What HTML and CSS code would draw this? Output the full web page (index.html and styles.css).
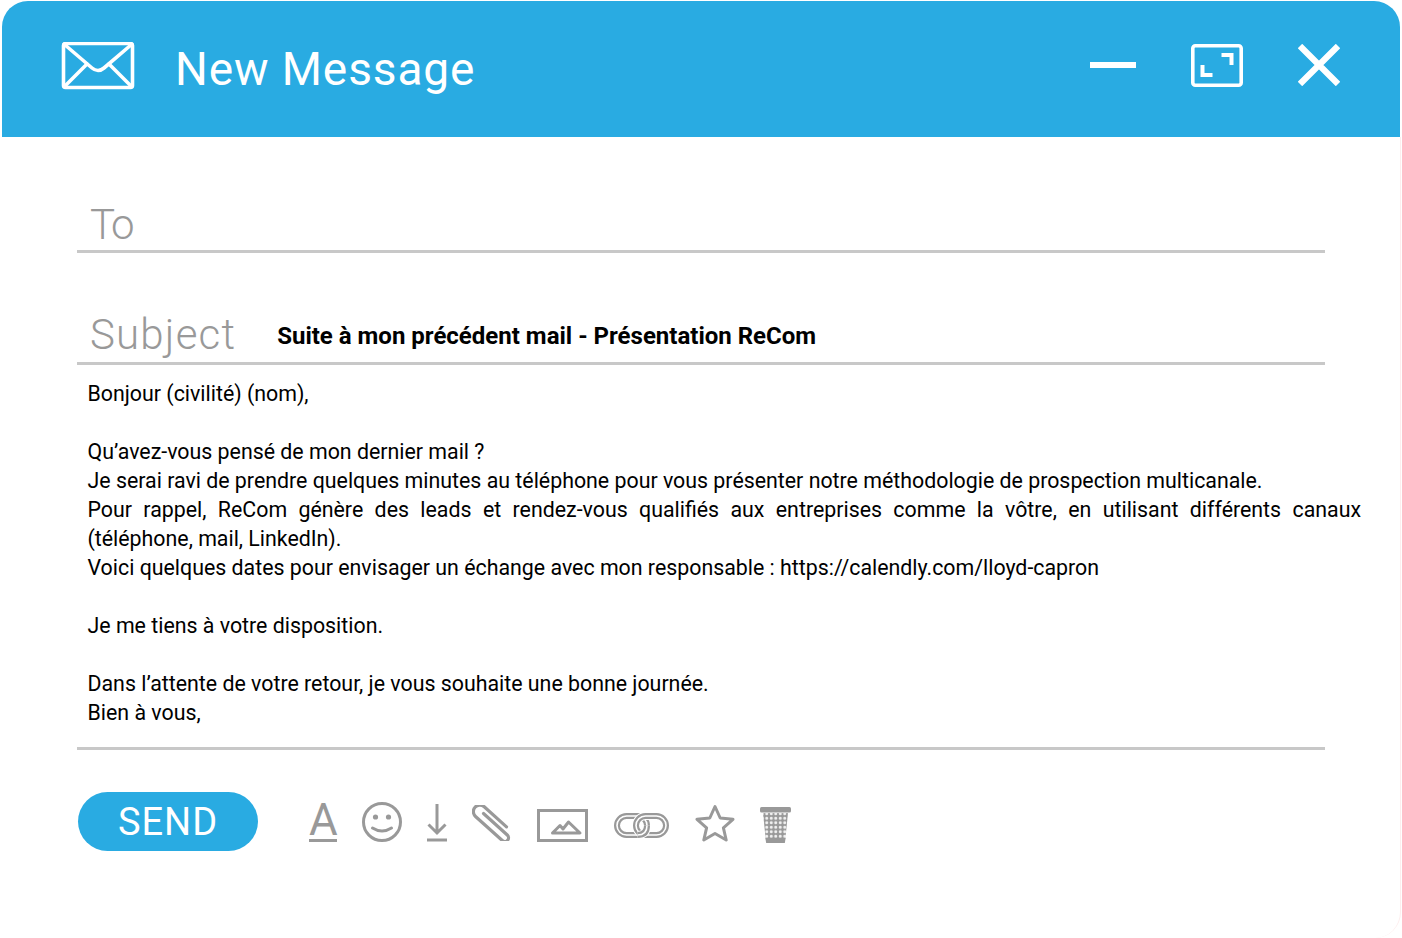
FILE: index.html
```html
<!DOCTYPE html>
<html lang="fr">
<head>
    <meta charset="UTF-8">
    <meta name="viewport" content="width=device-width, initial-scale=1.0">
    <title>New Message</title>
    <link rel="stylesheet" href="styles.css">
</head>
<body>
    <div class="window">
        <!-- Barre de titre -->
        <div class="header">
            <svg class="icon-mail" width="74" height="48" viewBox="0 0 74 48" fill="none" stroke="#fff" stroke-width="3.600" stroke-linejoin="round" stroke-linecap="round">
                <rect x="2.500" y="1.500" width="69" height="44" rx="2"/>
                <path d="M3.500 2.500 L31 26 Q37 31 43 26 L70.500 2.500"/>
                <path d="M3.500 44.500 L26 22 M70.500 44.500 L48 22"/>
            </svg>
            <h1 class="title">New Message</h1>
            <div class="controls">
                <svg class="icon-min" width="46" height="6" viewBox="0 0 46 6"><rect width="46" height="6" fill="#fff"/></svg>
                <svg class="icon-max" width="52" height="43" viewBox="0 0 52 43" fill="none" stroke="#fff">
                    <rect x="1.800" y="1.800" width="48.400" height="39.400" rx="2.500" stroke-width="3.600"/>
                    <path d="M30.500 11 H40.500 V21 M11.500 21 V31 H21.500" stroke-width="4"/>
                </svg>
                <svg class="icon-close" width="42" height="42" viewBox="0 0 42 42" stroke="#fff" stroke-width="6.200">
                    <path d="M2 2 L40 40 M40 2 L2 40"/>
                </svg>
            </div>
        </div>

        <!-- Formulaire -->
        <div class="form">
            <div class="field field-to">
                <span class="label">To</span>
            </div>
            <div class="field field-subject">
                <span class="label">Subject</span>
                <span class="subject">Suite à mon précédent mail - Présentation ReCom</span>
            </div>

            <div class="message">
                <p>Bonjour (civilité) (nom),</p>
                <p>&nbsp;</p>
                <p>Qu’avez-vous pensé de mon dernier mail ?</p>
                <p>Je serai ravi de prendre quelques minutes au téléphone pour vous présenter notre méthodologie de prospection multicanale.</p>
                <p>Pour rappel, ReCom génère des leads et rendez-vous qualifiés aux entreprises comme la vôtre, en utilisant différents canaux (téléphone, mail, LinkedIn).</p>
                <p>Voici quelques dates pour envisager un échange avec mon responsable : https://calendly.com/lloyd-capron</p>
                <p>&nbsp;</p>
                <p>Je me tiens à votre disposition.</p>
                <p>&nbsp;</p>
                <p>Dans l’attente de votre retour, je vous souhaite une bonne journée.</p>
                <p>Bien à vous,</p>
            </div>
            <div class="rule"></div>

            <!-- Barre d'outils -->
            <div class="toolbar">
                <button class="send">SEND</button>
                <div class="tools">
                    <span class="tool-font">A</span>
                    <svg width="40" height="40" viewBox="0 0 40 40" fill="none" stroke="#999" stroke-width="3">
                        <circle cx="20" cy="20" r="18.500"/>
                        <circle cx="13.500" cy="15" r="2.600" fill="#999" stroke="none"/>
                        <circle cx="26.500" cy="15" r="2.600" fill="#999" stroke="none"/>
                        <path d="M10.500 26 Q20 32 29.500 26" stroke-linecap="round"/>
                    </svg>
                    <svg class="tool-down" width="20" height="38" viewBox="0 0 20 38" fill="none" stroke="#999" stroke-width="3">
                        <path d="M10 0 V29 M1.500 20.500 L10 29 L18.500 20.500"/>
                        <path d="M0 36 H20"/>
                    </svg>
                    <svg class="tool-clip" width="41" height="36" viewBox="0 0 41 36" fill="none" stroke="#999" stroke-width="3.200" stroke-linecap="round">
                        <g transform="translate(20.500,18) rotate(42) translate(-25,-8.500)">
                            <path d="M38 2 H8 a6.500 6.500 0 0 0 0 13 H44 a3.750 3.750 0 0 0 0 -7.500 H12"/>
                        </g>
                    </svg>
                    <svg class="tool-image" width="51" height="33" viewBox="0 0 51 33" fill="none" stroke="#999" stroke-width="3">
                        <rect x="1.500" y="1.500" width="48" height="30"/>
                        <path d="M15.500 24 L23 16.500 L26 20 L31.500 13 L43 24 Z" stroke-linejoin="round"/>
                    </svg>
                    <svg class="tool-link" width="55" height="25" viewBox="0 0 55 25" fill="none">
                        <rect x="3" y="3" width="30" height="19" rx="9.500" stroke="#999" stroke-width="6"/>
                        <rect x="3" y="3" width="30" height="19" rx="9.500" stroke="#fff" stroke-width="1.600"/>
                        <rect x="22" y="3" width="30" height="19" rx="9.500" stroke="#fff" stroke-width="8"/>
                        <rect x="22" y="3" width="30" height="19" rx="9.500" stroke="#999" stroke-width="6"/>
                        <rect x="22" y="3" width="30" height="19" rx="9.500" stroke="#fff" stroke-width="1.600"/>
                        <path d="M23.500 22 Q33 22 33 12.500" stroke="#fff" stroke-width="8"/>
                        <path d="M23.500 22 Q33 22 33 12.500" stroke="#999" stroke-width="6"/>
                        <path d="M23.500 22 Q33 22 33 12.500" stroke="#fff" stroke-width="1.600"/>
                    </svg>
                    <svg class="tool-star" width="40" height="38" viewBox="0 0 40 38" fill="none" stroke="#999" stroke-width="3" stroke-linejoin="round">
                        <path d="M20 2.500 L25.200 14 L38 15.300 L28.400 23.800 L31.200 36 L20 29.500 L8.800 36 L11.600 23.800 L2 15.300 L14.800 14 Z"/>
                    </svg>
                    <svg class="tool-trash" width="31" height="36" viewBox="0 0 31 36">
                        <defs>
                            <pattern id="mesh" width="4.500" height="4.500" patternUnits="userSpaceOnUse">
                                <rect width="4.500" height="4.500" fill="#999"/>
                                <circle cx="2.250" cy="2.250" r="1.500" fill="#f2f2f2"/>
                            </pattern>
                        </defs>
                        <rect width="31" height="5.500" rx="1.500" fill="#999"/>
                        <path d="M3 6 H28 L25 35 Q25 36 24 36 H7 Q6 36 6 35 Z" fill="url(#mesh)"/>
                        <path d="M5.500 31 H25.500 L25 35 Q25 36 24 36 H7 Q6 36 6 35 Z" fill="#999"/>
                    </svg>
                </div>
            </div>
        </div>
    </div>
</body>
</html>
```

FILE: styles.css
```css
/* Styles globaux */
body, html {
    margin: 0;
    padding: 0;
    background: #fff;
    font-family: 'Roboto', sans-serif;
    color: #000;
    overflow: hidden;
}

.window {
    width: 1402px;
    height: 938px;
    box-sizing: border-box;
    padding: 1px 1px 0 2px;
    display: flex;
    flex-direction: column;
}

/* Barre de titre */
.header {
    height: 136px;
    box-sizing: border-box;
    margin-right: 1px;
    padding: 41px 60px 0 59px;
    display: flex;
    align-items: flex-start;
    background: #29abe2;
    border-radius: 26px 26px 0 0;
}

.icon-mail {
    display: block;
}

.title {
    margin: 0 0 0 40px;
    font-family: 'Roboto', sans-serif;
    font-size: 46px;
    line-height: 54px;
    font-weight: 400;
    letter-spacing: 0.900px;
    color: #fff;
}

.controls {
    margin-left: auto;
    display: flex;
    align-items: flex-start;
}

.controls svg {
    display: block;
}

.icon-min {
    margin-top: 20px;
}

.icon-max {
    margin: 2px 55px 0 55px;
}

.icon-close {
    margin-top: 2px;
}

/* Formulaire */
.form {
    flex: 1;
    padding-left: 75px;
    border-right: 1px solid #fdeeee;
    border-radius: 0 0 26px 0;
}

.field {
    width: 1248px;
    box-sizing: border-box;
    padding-left: 13px;
    display: flex;
    align-items: flex-start;
    border-bottom: 3px solid #c8c8c8;
}

.field-to {
    height: 116px;
    padding-top: 62px;
}

.field-subject {
    height: 112px;
    padding-top: 56px;
}

.label {
    font-size: 42px;
    line-height: 52px;
    font-weight: 300;
    letter-spacing: 1.200px;
    color: #999;
}

.field-to .label {
    letter-spacing: -2px;
}

.subject {
    margin: 12px 0 0 41px;
    font-size: 24px;
    line-height: 30px;
    font-weight: 700;
    color: #000;
}

.message {
    margin: 14px 39px 0 10.500px;
    font-size: 21.350px;
    line-height: 29px;
    text-align: justify;
}

.message p {
    margin: 0;
}

.rule {
    width: 1248px;
    height: 3px;
    margin-top: 20px;
    background: #c8c8c8;
}

/* Barre d'outils */
.toolbar {
    margin-top: 42px;
    display: flex;
    align-items: flex-start;
}

.send {
    width: 180px;
    height: 59px;
    margin-left: 1px;
    padding: 0;
    border: none;
    border-radius: 30px;
    background: #29abe2;
    color: #fff;
    font-family: 'Roboto', sans-serif;
    font-size: 38px;
    font-weight: 400;
    letter-spacing: 1px;
}

.tools {
    margin-left: 51px;
    display: flex;
    align-items: flex-start;
    gap: 25px;
    padding-top: 10px;
}

.tools svg {
    display: block;
}

.tool-font {
    width: 28px;
    height: 38px;
    margin-top: -1px;
    border-bottom: 3px solid #999;
    font-size: 44px;
    font-weight: 400;
    line-height: 38px;
    text-align: center;
    color: #999;
}

.tool-down {
    margin-top: 2px;
}

.tool-clip {
    margin-top: 3px;
}

.tool-image {
    margin: 7px 0 0 -1px;
}

.tool-link {
    margin-top: 11px;
    margin-left: 1px;
}

.tool-star {
    margin-top: 2px;
    margin-left: 1px;
}

.tool-trash {
    margin-top: 5px;
}
```
